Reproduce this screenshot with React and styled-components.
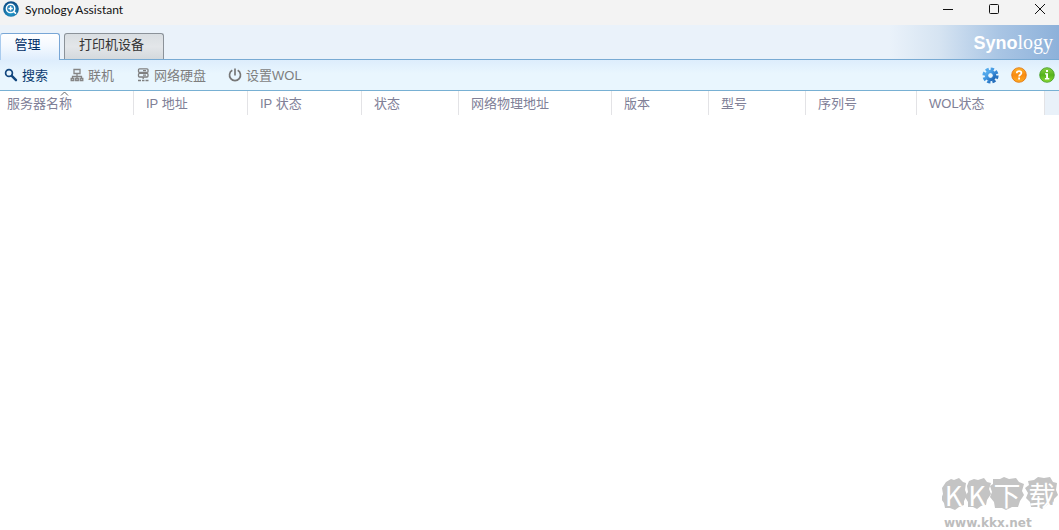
import React from 'react';
import styled, { createGlobalStyle } from 'styled-components';

const GlobalStyle = createGlobalStyle`
  * { box-sizing: border-box; }
  body {
    margin: 0;
    background: #fff;
    font-family: "Liberation Sans", "Noto Sans CJK SC", sans-serif;
    font-size: 13px;
  }
  button { font: inherit; border: 0; padding: 0; background: none; cursor: pointer; }
  svg { display: block; flex: none; }
`;

const Window = styled.div`
  position: relative;
  display: flex;
  flex-direction: column;
  min-height: 100vh;
  overflow: hidden;
`;

const TitleBar = styled.header`
  display: flex;
  align-items: flex-start;
  height: 25px;
  padding-left: 3px;
  background: #f3f3f3;
`;

const AppTitle = styled.h1`
  flex: 1;
  margin: 0 0 0 6px;
  font: 400 12px/20px Lato, sans-serif;
  color: #111;
`;

const AppIcon = styled.span`
  padding-top: 1px;
`;

const WindowButton = styled.button`
  display: flex;
  justify-content: center;
  width: 46px;
  height: 20px;
  padding-top: 3px;
  &:last-child { width: 46px; margin-right: -4px; }
`;

const Banner = styled.div`
  display: flex;
  justify-content: space-between;
  height: 35px;
  border-bottom: 1px solid #78aad3;
  background: linear-gradient(to left, #8db1da 0, #a9c5e4 60px, #d6e4f2 120px, #eaf2fa 170px);
`;

const Tabs = styled.nav`
  display: flex;
  align-items: flex-end;
  gap: 4px;
`;

const Tab = styled.button`
  width: ${(p) => (p.$active ? '60px' : '100px')};
  height: ${(p) => (p.$active ? '27px' : '26px')};
  margin-bottom: ${(p) => (p.$active ? '-1px' : '0')};
  padding: 0 5px 4px 0;
  border: 1px solid ${(p) => (p.$active ? '#78a6d6' : '#8b9299')};
  border-bottom: 0;
  border-radius: 3px 3px 0 0;
  border-left-color: ${(p) => (p.$active ? '#a9cbee' : '#8b9299')};
  background: ${(p) => (p.$active
    ? 'linear-gradient(#ffffff, #f4f9ff 45%, #deedfd)'
    : 'linear-gradient(#d9dee2, #e3e6e9 50%, #d4d9dd)')};
  color: ${(p) => (p.$active ? '#002e66' : '#333')};
  line-height: 20px;
`;

const Brand = styled.div`
  display: flex;
  align-items: baseline;
  padding-right: 6px;
  color: #fff;
  font: 400 20px/34px "Liberation Serif", serif;
  b {
    font: 700 18px/34px "Liberation Sans", sans-serif;
  }
`;

const Toolbar = styled.div`
  display: flex;
  align-items: center;
  justify-content: space-between;
  height: 31px;
  padding: 0 4px;
  border-bottom: 1px solid #78b0d3;
  background: linear-gradient(#ddedfc, #e9f6fe 45%, #e9f6fe);
`;

const ToolGroup = styled.div`
  display: flex;
  align-items: center;
  gap: ${(p) => p.$gap};
`;

const Tool = styled.button`
  display: flex;
  align-items: center;
  gap: 4px;
  height: 28px;
  color: ${(p) => (p.$enabled ? '#0a3a70' : '#7e7e7e')};
`;

const ToolLabel = styled.span`
  padding-bottom: 2px;
`;

const ServerTable = styled.table`
  width: 100%;
  table-layout: fixed;
  border-collapse: separate;
  border-spacing: 0;
`;

const HeadCell = styled.th`
  position: relative;
  height: 24px;
  padding: 1px 0 0 12px;
  border-right: 1px solid #e3e3e6;
  color: #808097;
  font-weight: 400;
  line-height: 23px;
  text-align: left;
  white-space: nowrap;
  &:first-child { padding-left: 7px; }
`;

const FillerCell = styled.td`
  background: #e9f1f9;
`;

const SortMark = styled.svg`
  position: absolute;
  top: 0;
  left: 60px;
`;

const Watermark = styled.div`
  position: absolute;
  right: 0;
  bottom: 0;
  width: 117px;
  height: 53px;
`;

const Blobs = styled.svg`
  position: absolute;
  top: 0;
  left: 0;
`;

const WatermarkName = styled.div`
  position: relative;
  display: grid;
  grid-template-columns: 23px 24px 36px 34px;
  height: 38px;
  color: #fff;
  font: 400 27px/35px "Noto Sans CJK SC", sans-serif;
  text-align: center;
`;

const WatermarkUrl = styled.div`
  padding-left: 2px;
  color: #bdbdbd;
  font: 700 12px/16px "DejaVu Sans", sans-serif;
`;

function Logo() {
  return (
    <svg width="16" height="16" viewBox="0 0 16 16">
      <defs>
        <radialGradient id="logoFill" cx="50%" cy="70%" r="65%">
          <stop offset="0" stopColor="#29a7d6" />
          <stop offset="1" stopColor="#0b4c86" />
        </radialGradient>
      </defs>
      <circle cx="8" cy="8" r="7.8" fill="url(#logoFill)" />
      <circle cx="7.6" cy="7.4" r="4.2" fill="#1d7db5" stroke="#fff" strokeWidth="1.5" />
      <path d="M7.6 5.2v4.4M5.4 7.4h4.4M10.8 10.6l2.2 2" stroke="#fff" strokeWidth="1.5" />
    </svg>
  );
}

function SearchIcon() {
  return (
    <svg width="14" height="14" viewBox="0 0 14 14" fill="none" stroke="#12477e">
      <circle cx="5" cy="5" r="3.4" strokeWidth="1.7" />
      <path d="M7.8 7.8l4.2 4.4" strokeWidth="2.4" strokeLinecap="round" />
    </svg>
  );
}

function ConnectIcon() {
  return (
    <svg width="14" height="14" viewBox="0 0 14 14" fill="none" stroke="#858585">
      <path d="M4 1.5h6v4H4zM7 5.5v3M2.5 10V8.5h9V10M7 8.5V10" strokeWidth="1.3" />
      <path d="M1.2 10.5h2.600v2H1.200zM5.700 10.5h2.600v2H5.700zM10.200 10.5h2.600v2h-2.600z" strokeWidth="1.300" />
    </svg>
  );
}

function DriveIcon() {
  return (
    <svg width="14" height="14" viewBox="0 0 14 14" fill="none" stroke="#808080" strokeWidth="1.3">
      <rect x="2.5" y="0.8" width="9.500" height="3.6" rx="1" />
      <rect x="2.5" y="5.4" width="9.500" height="3.6" rx="1" />
      <path d="M7 2.600h3M7 7.200h3M7.200 9v2" />
      <path d="M2 12.500h3M6 12.500h2.500M9.500 12.500h3" strokeWidth="1.700" />
    </svg>
  );
}

function PowerIcon() {
  return (
    <svg width="14" height="14" viewBox="0 0 14 14" fill="none" stroke="#777" strokeWidth="1.7">
      <path d="M4.300 2.300a5.500 5.500 0 1 0 5.400 0M7 0.500v7" />
    </svg>
  );
}

function GearIcon() {
  return (
    <svg width="17" height="17" viewBox="0 0 17 17">
      <defs>
        <linearGradient id="gearFill" x2="1" y2="1">
          <stop offset="0" stopColor="#5db4f2" />
          <stop offset="0.500" stopColor="#3a8fdc" />
          <stop offset="1" stopColor="#1c62b0" />
        </linearGradient>
      </defs>
      <g stroke="url(#gearFill)">
        <circle cx="8.5" cy="8.5" r="4" fill="none" strokeWidth="3.6" />
        <circle cx="8.5" cy="8.5" r="6.7" fill="none" strokeWidth="2.8" strokeDasharray="3.300 1.962" />
      </g>
      <circle cx="8.500" cy="8.500" r="2" fill="#e9f6fe" />
    </svg>
  );
}

function HelpIcon() {
  return (
    <svg width="16" height="16" viewBox="0 0 16 16">
      <defs>
        <linearGradient id="helpFill" x2="0" y2="1">
          <stop offset="0" stopColor="#fdb42c" />
          <stop offset="0.500" stopColor="#f98b10" />
          <stop offset="1" stopColor="#ffae25" />
        </linearGradient>
      </defs>
      <circle cx="8" cy="8" r="7.300" fill="url(#helpFill)" stroke="#e0700c" strokeWidth="0.800" />
      <path d="M5.700 6.300c0-3 4.700-2.800 4.700-.2 0 1.700-2.300 1.600-2.300 3.300" fill="none" stroke="#fff" strokeWidth="1.700" />
      <path d="M7.200 10.600h1.800v1.800H7.200z" fill="#fff" />
    </svg>
  );
}

function InfoIcon() {
  return (
    <svg width="16" height="16" viewBox="0 0 16 16">
      <defs>
        <linearGradient id="infoFill" x2="0" y2="1">
          <stop offset="0" stopColor="#8bd147" />
          <stop offset="0.500" stopColor="#56b31c" />
          <stop offset="1" stopColor="#8cdb35" />
        </linearGradient>
      </defs>
      <circle cx="8" cy="8" r="7.300" fill="url(#infoFill)" stroke="#3f9a22" strokeWidth="0.800" />
      <path d="M7 3h2v2H7zM6 6.300h3v4.800h1.300v1.300H5.900v-1.300h1.200V7.600H6z" fill="#fff" />
    </svg>
  );
}

const columns = [
  ['服务器名称', 134],
  ['IP 地址', 114],
  ['IP 状态', 114],
  ['状态', 97],
  ['网络物理地址', 153],
  ['版本', 97],
  ['型号', 97],
  ['序列号', 111],
  ['WOL状态', 128],
];

export default function App() {
  return (
    <>
      <GlobalStyle />
      <Window>
        <TitleBar>
          <AppIcon><Logo /></AppIcon>
          <AppTitle>Synology Assistant</AppTitle>
          <WindowButton aria-label="最小化">
            <svg width="12" height="12" stroke="#111"><path d="M1 6.500h10" /></svg>
          </WindowButton>
          <WindowButton aria-label="最大化">
            <svg width="12" height="12" fill="none" stroke="#111"><rect x="1.500" y="1.500" width="9" height="9" rx="1" /></svg>
          </WindowButton>
          <WindowButton aria-label="关闭">
            <svg width="12" height="12" stroke="#111"><path d="M1 1l10 10M11 1L1 11" /></svg>
          </WindowButton>
        </TitleBar>
        <Banner>
          <Tabs>
            <Tab $active>管理</Tab>
            <Tab>打印机设备</Tab>
          </Tabs>
          <Brand><b>Syno</b>logy</Brand>
        </Banner>
        <Toolbar>
          <ToolGroup $gap="22px">
            <Tool $enabled><SearchIcon /><ToolLabel>搜索</ToolLabel></Tool>
            <Tool><ConnectIcon /><ToolLabel>联机</ToolLabel></Tool>
            <Tool><DriveIcon /><ToolLabel>网络硬盘</ToolLabel></Tool>
            <Tool><PowerIcon /><ToolLabel>设置WOL</ToolLabel></Tool>
          </ToolGroup>
          <ToolGroup $gap="12px">
            <Tool aria-label="设置"><GearIcon /></Tool>
            <Tool aria-label="帮助"><HelpIcon /></Tool>
            <Tool aria-label="关于"><InfoIcon /></Tool>
          </ToolGroup>
        </Toolbar>
        <ServerTable>
          <colgroup>
            {columns.map(([name, width]) => <col key={name} width={width} />)}
            <col />
          </colgroup>
          <thead>
            <tr>
              {columns.map(([name], i) => (
                <HeadCell key={name} scope="col">
                  {name}
                  {i === 0 && (
                    <SortMark width="9" height="6" fill="none" stroke="#666">
                      <path d="M1 4.500l3.500-3.500L8 4.500" />
                    </SortMark>
                  )}
                </HeadCell>
              ))}
              <FillerCell />
            </tr>
          </thead>
        </ServerTable>
        <Watermark>
          <Blobs width="117" height="37" viewBox="0 0 117 37" fill="#c4c4c4">
            <path d="M4 5l5-3 3 1 5-2 4 4 3 1-1 7 2 5-3 6 0 4-5 2-4 3-5-2-5 0-1-5-3-4 2-5-1-6z" />
            <path d="M27 4l5-2 4 1 6-2 3 4 4 1-2 6 2 5-4 6-1 5-5 1-4 3-4-2-5 0 0-5-3-5 3-5-1-6z" />
            <path d="M51 2l7 0 4-2 5 2 7-1 3 4 5 2-2 7 2 4-4 6-2 6-6 0-6 3-4-2-7 0-1-6-4-5 2-5-2-6 3-2z" />
            <path d="M86 4l6-1 4-3 6 1 6-1 3 5 4 1-1 7 2 5-4 4-1 6-6 0-5 4-4-2-7 0-1-5-4-4 2-5-3-5 4-3z" />
          </Blobs>
          <WatermarkName><span>K</span><span>K</span><span>下</span><span>载</span></WatermarkName>
          <WatermarkUrl>www.kkx.net</WatermarkUrl>
        </Watermark>
      </Window>
    </>
  );
}
